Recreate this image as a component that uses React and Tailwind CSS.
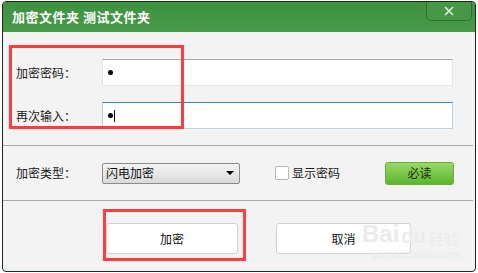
import React from 'react';

const cjk = { fontFamily: '"Noto Sans CJK SC", "Noto Sans", sans-serif' };

const Row = ({ label, children }) => (
    <div className="flex items-center h-[27px]">
        <div className="w-[99px] pl-[13px] text-[12px] text-[#1a1a1a]">{label}</div>
        {children}
    </div>
);

const Dot = () => <span className="block w-[5px] h-[5px] rounded-full bg-black" />;

const App = () => {
    return (
        <div className="relative w-[478px] h-[273px] bg-white overflow-hidden" style={cjk}>
            {/* dialog window */}
            <div className="absolute left-[2px] top-[1px] w-[474px] h-[271px] border border-[#1c2a1c] rounded-[4px] bg-[#f3f3f3] flex flex-col overflow-hidden">
                {/* title bar */}
                <div className="relative h-[30px] bg-gradient-to-b from-[#3e913e] to-[#489b48] flex items-center pl-[9px] shrink-0">
                    <span className="text-white text-[13px] font-bold tracking-[0.5px]">加密文件夹 测试文件夹</span>
                    <div className="absolute right-[3px] top-[-1px] w-[46px] h-[20px] border border-[#2f6f2f] border-t-0 rounded-b-[5px] bg-[#469846] flex items-center justify-center">
                        <svg width="10" height="10" viewBox="0 0 10 10">
                            <path d="M1 1 L9 9 M9 1 L1 9" stroke="#e8f3e8" strokeWidth="1.5" />
                        </svg>
                    </div>
                </div>

                {/* password section */}
                <div className="pt-[27px] pb-[16px] flex flex-col gap-[16px]">
                    <Row label="加密密码：">
                        <div className="w-[351px] h-[27px] bg-white border border-[#e0e6ec] border-t-[#ababab] flex items-center pl-[5px]">
                            <Dot />
                        </div>
                    </Row>
                    <Row label="再次输入：">
                        <div className="w-[351px] h-[27px] bg-white border border-[#b7d3ea] border-t-[#3d7fb5] flex items-center pl-[5px] gap-[1px]">
                            <Dot />
                            <span className="block w-[1px] h-[12px] bg-black" />
                        </div>
                    </Row>
                </div>
                <div className="h-[1px] bg-[#a8a8a8] mr-[2px]" />

                {/* type section */}
                <div className="h-[54px] flex items-center">
                    <div className="w-[99px] pl-[13px] text-[12px] text-[#1a1a1a]">加密类型：</div>
                    <div className="w-[138px] h-[21px] border border-[#8c8c8c] rounded-[2px] bg-gradient-to-b from-[#f4f4f4] to-[#dadada] flex items-center justify-between pl-[3px] pr-[5px] text-[12px] text-[#111]">
                        <span>闪电加密</span>
                        <span className="w-0 h-0 border-l-[4px] border-r-[4px] border-t-[4px] border-l-transparent border-r-transparent border-t-black" />
                    </div>
                    <div className="ml-[35px] flex items-center">
                        <span className="w-[14px] h-[14px] bg-white border border-[#b8b8b8] rounded-[2px]" />
                        <span className="ml-[3px] text-[12px] text-[#1a1a1a]">显示密码</span>
                    </div>
                    <div className="ml-[45px] w-[69px] h-[23px] rounded-[3px] border border-[#6aad37] bg-gradient-to-b from-[#98d966] to-[#5ab62b] flex items-center justify-center text-[12px] text-[#1d2d12]">
                        必读
                    </div>
                </div>
                <div className="h-[1px] bg-[#a8a8a8] mr-[2px]" />

                {/* buttons */}
                <div className="flex pt-[22px] pl-[103px] gap-[38px]">
                    <div className="w-[132px] h-[31px] bg-white border border-[#d2d2d2] rounded-[3px] flex items-center justify-center text-[12px] text-[#111]">加密</div>
                    <div className="w-[135px] h-[31px] bg-white border border-[#d2d2d2] rounded-[3px] flex items-center justify-center text-[12px] text-[#111]">取消</div>
                </div>
            </div>

            {/* watermark */}
            <div className="absolute left-[362px] top-[222px] text-[#ebebeb] leading-none pointer-events-none" style={{ fontFamily: '"Liberation Sans", sans-serif' }}>
                <div className="flex items-end">
                    <span className="text-[24px] font-bold">Bai</span>
                    <span className="text-[20px] font-bold ml-[2px]">du</span>
                    <span className="text-[15px] ml-[3px]" style={cjk}>经验</span>
                </div>
                <div className="text-[11px] mt-[3px] ml-[10px]">jingyan.baidu.com</div>
            </div>

            {/* annotation boxes */}
            <div className="absolute left-[9px] top-[45px] w-[175px] h-[84px] border-[3px] border-[#ff3d3d]" />
            <div className="absolute left-[103px] top-[209px] w-[143px] h-[52px] border-[3px] border-[#ff3d3d]" />
        </div>
    );
};

export default App;
